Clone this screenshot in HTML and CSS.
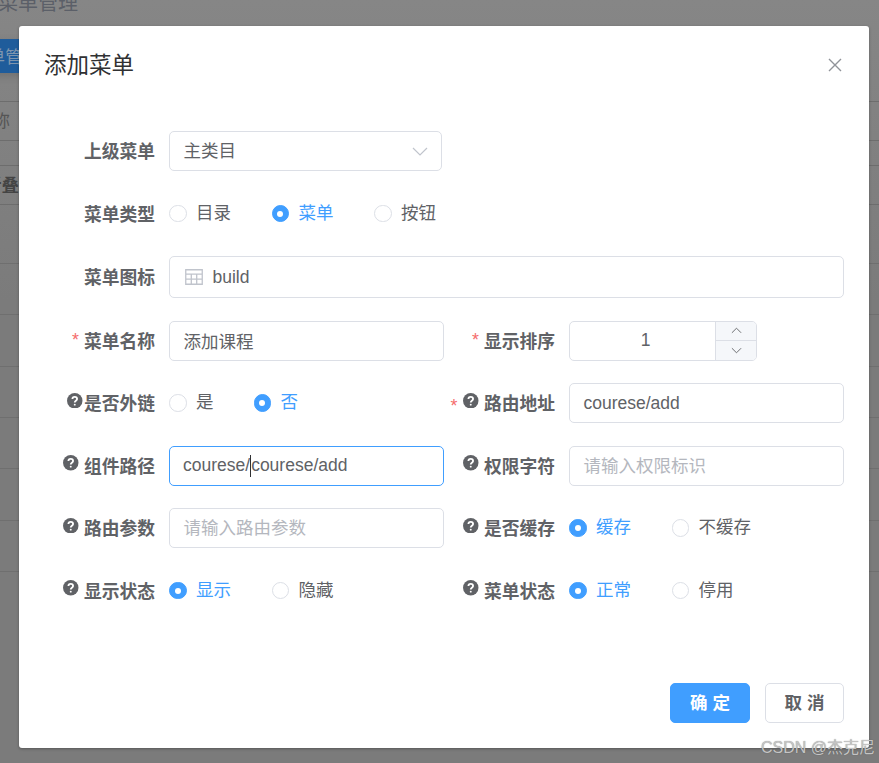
FILE: index.html
```html
<!DOCTYPE html>
<html lang="zh-CN">
<head>
<meta charset="utf-8">
<title>添加菜单</title>
<link rel="stylesheet" href="styles.css">
</head>
<body>
<div class="page">
  <div class="page-title">菜单管理</div>
  <div class="page-btn">菜单管理</div>
  <div class="table">
    <div class="row head"><span class="cell">菜单名称</span></div>
    <div class="row head second"><span class="cell bold">展开折叠</span></div>
    <div class="row tall"></div>
    <div class="row"></div><div class="row"></div><div class="row"></div>
    <div class="row"></div><div class="row"></div><div class="row"></div>
  </div>
</div>

<div class="dialog">
  <header class="dialog-header">
    <span class="dialog-title">添加菜单</span>
    <svg class="close" viewBox="0 0 14 14"><path d="M1 1 13 13M13 1 1 13"/></svg>
  </header>

  <div class="form">
    <div class="item wide">
      <div class="label">上级菜单</div>
      <div class="field select"><span class="grow cjk">主类目</span>
        <svg class="chevron" viewBox="0 0 16 9"><path d="M1 1 8 8 15 1"/></svg>
      </div>
    </div>

    <div class="item wide">
      <div class="label">菜单类型</div>
      <div class="radios">
        <span class="radio"><i class="dot"></i>目录</span>
        <span class="radio on"><i class="dot"></i>菜单</span>
        <span class="radio"><i class="dot"></i>按钮</span>
      </div>
    </div>

    <div class="item wide">
      <div class="label">菜单图标</div>
      <div class="field tall-field">
        <svg class="table-icon" viewBox="0 0 18 16"><path d="M.75.75h16.5v14.5H.75zM.75 5.2h16.5M.75 10.2h16.5M6.3 5.2v10M11.7 5.2v10"/></svg>
        <span>build</span>
      </div>
    </div>

    <div class="item">
      <div class="label"><b class="req">*</b>菜单名称</div>
      <div class="field">添加课程</div>
    </div>
    <div class="item">
      <div class="label"><b class="req">*</b>显示排序</div>
      <div class="field number">
        <span class="num-value">1</span>
        <span class="num-btns">
          <span class="num-btn"><svg viewBox="0 0 12 7"><path d="M1 6 6 1 11 6"/></svg></span>
          <span class="num-btn"><svg viewBox="0 0 12 7"><path d="M1 1 6 6 11 1"/></svg></span>
        </span>
      </div>
    </div>

    <div class="item">
      <div class="label"><svg class="help tight" viewBox="0 0 16 16"><circle cx="8" cy="8" r="8"/><path class="q" d="M5.6 6.2C5.6 4.8 6.7 4 8 4s2.4.8 2.4 2.1c0 1.9-2.4 1.8-2.4 3.6"/><circle class="qd" cx="8" cy="12" r="1"/></svg>是否外链</div>
      <div class="radios">
        <span class="radio narrow"><i class="dot"></i>是</span>
        <span class="radio on"><i class="dot"></i>否</span>
      </div>
    </div>
    <div class="item">
      <div class="label"><b class="req wide-req">*</b><svg class="help" viewBox="0 0 16 16"><circle cx="8" cy="8" r="8"/><path class="q" d="M5.6 6.2C5.6 4.8 6.7 4 8 4s2.4.8 2.4 2.1c0 1.9-2.4 1.8-2.4 3.6"/><circle class="qd" cx="8" cy="12" r="1"/></svg>路由地址</div>
      <div class="field">courese/add</div>
    </div>

    <div class="item">
      <div class="label"><svg class="help" viewBox="0 0 16 16"><circle cx="8" cy="8" r="8"/><path class="q" d="M5.6 6.2C5.6 4.8 6.7 4 8 4s2.4.8 2.4 2.1c0 1.9-2.4 1.8-2.4 3.6"/><circle class="qd" cx="8" cy="12" r="1"/></svg>组件路径</div>
      <div class="field focus">courese/<span class="caret"></span>courese/add</div>
    </div>
    <div class="item">
      <div class="label"><svg class="help" viewBox="0 0 16 16"><circle cx="8" cy="8" r="8"/><path class="q" d="M5.6 6.2C5.6 4.8 6.7 4 8 4s2.4.8 2.4 2.1c0 1.9-2.4 1.8-2.4 3.6"/><circle class="qd" cx="8" cy="12" r="1"/></svg>权限字符</div>
      <div class="field placeholder">请输入权限标识</div>
    </div>

    <div class="item">
      <div class="label"><svg class="help" viewBox="0 0 16 16"><circle cx="8" cy="8" r="8"/><path class="q" d="M5.6 6.2C5.6 4.8 6.7 4 8 4s2.4.8 2.4 2.1c0 1.9-2.4 1.8-2.4 3.6"/><circle class="qd" cx="8" cy="12" r="1"/></svg>路由参数</div>
      <div class="field placeholder">请输入路由参数</div>
    </div>
    <div class="item">
      <div class="label"><svg class="help" viewBox="0 0 16 16"><circle cx="8" cy="8" r="8"/><path class="q" d="M5.6 6.2C5.6 4.8 6.7 4 8 4s2.4.8 2.4 2.1c0 1.9-2.4 1.8-2.4 3.6"/><circle class="qd" cx="8" cy="12" r="1"/></svg>是否缓存</div>
      <div class="radios">
        <span class="radio on"><i class="dot"></i>缓存</span>
        <span class="radio"><i class="dot"></i>不缓存</span>
      </div>
    </div>

    <div class="item">
      <div class="label"><svg class="help" viewBox="0 0 16 16"><circle cx="8" cy="8" r="8"/><path class="q" d="M5.6 6.2C5.6 4.8 6.7 4 8 4s2.4.8 2.4 2.1c0 1.9-2.4 1.8-2.4 3.6"/><circle class="qd" cx="8" cy="12" r="1"/></svg>显示状态</div>
      <div class="radios">
        <span class="radio on"><i class="dot"></i>显示</span>
        <span class="radio"><i class="dot"></i>隐藏</span>
      </div>
    </div>
    <div class="item">
      <div class="label"><svg class="help" viewBox="0 0 16 16"><circle cx="8" cy="8" r="8"/><path class="q" d="M5.6 6.2C5.6 4.8 6.7 4 8 4s2.4.8 2.4 2.1c0 1.9-2.4 1.8-2.4 3.6"/><circle class="qd" cx="8" cy="12" r="1"/></svg>菜单状态</div>
      <div class="radios">
        <span class="radio on"><i class="dot"></i>正常</span>
        <span class="radio"><i class="dot"></i>停用</span>
      </div>
    </div>
  </div>

  <footer class="dialog-footer">
    <span class="btn primary">确 定</span>
    <span class="btn">取 消</span>
  </footer>
</div>

<div class="watermark">CSDN @杰克尼</div>
</body>
</html>
```
FILE: styles.css
```css
* { box-sizing: border-box; }

html, body {
  margin: 0;
  height: 100%;
  overflow: hidden;
}

body {
  font-family: "Liberation Sans", "Noto Sans CJK SC", sans-serif;
  font-size: 17.5px;
  color: #606266;
  background: linear-gradient(#868686, #7b7b7b 300px);
}

/* dimmed page behind the dialog */
.page {
  height: 763px;
  overflow: hidden;
}

.page-title {
  margin: -12px 0 0 -2px;
  height: 30px;
  line-height: 30px;
  font-size: 20px;
  color: #5b5f68;
}

.page-btn {
  margin: 21px 0 0 -30px;
  width: 110px;
  height: 34px;
  line-height: 36px;
  background: #1f5c9b;
  color: #7f96ae;
  font-size: 17.5px;
  box-shadow: 0 3px 8px rgba(0, 0, 0, .15);
}

.table {
  margin-top: 28px;
  border-top: 1px solid #6d6d6d;
}

.row {
  height: 51.3px;
  border-bottom: 1px solid #6f6f6f;
}

.row.head {
  height: 39px;
  line-height: 38px;
  border-bottom: 1px solid #6d6d6d;
}

.row.second {
  margin-top: 24px;
  border-top: 1px solid #6d6d6d;
  height: 40px;
}

.row.tall { height: 59.2px; }

.cell {
  display: block;
  margin-left: -60px;
  color: #555;
  font-size: 17.5px;
  white-space: nowrap;
}

.cell.bold {
  margin-left: -51px;
  font-weight: 700;
  color: #444;
}

/* dialog */
.dialog {
  position: absolute;
  left: 19px;
  top: 26px;
  width: 850px;
  height: 722px;
  display: flex;
  flex-direction: column;
  background: #fff;
  border-radius: 3px;
  box-shadow: 0 1px 3px rgba(0, 0, 0, .3);
}

.dialog-header {
  display: flex;
  align-items: center;
  justify-content: space-between;
  height: 78px;
  padding: 0 27px 0 25px;
}

.dialog-title {
  padding-top: 2px;
  font-size: 22.5px;
  line-height: 1;
  color: #303133;
}

.close {
  width: 14px;
  height: 14px;
  fill: none;
  stroke: #909399;
  stroke-width: 1.4;
}

.form {
  display: grid;
  grid-template-columns: 400px 400px;
  row-gap: 22.5px;
  margin-top: 27px;
  padding: 0 25px;
}

.item {
  display: flex;
  align-items: center;
  min-height: 40px;
}

.item.wide { grid-column: 1 / -1; }

.label {
  flex: none;
  display: flex;
  align-items: center;
  justify-content: flex-end;
  width: 125px;
  padding: 0 14px 2px 0;
  font-size: 17.75px;
  font-weight: 700;
  white-space: nowrap;
}

.req {
  margin: 3px 5px 0 0;
  color: #f56c6c;
  font-weight: 400;
  line-height: 1;
}

.req.wide-req { margin: 10px 6px 0 0; }

.help {
  flex: none;
  width: 15.5px;
  height: 15.5px;
  margin: 0 5px 3px 0;
  fill: #606266;
}

.help.tight { margin: 0 1px 3px 0; }

.help .q {
  fill: none;
  stroke: #fff;
  stroke-width: 1.9;
}

.help .qd { fill: #fff; }

.field {
  flex: 1;
  display: flex;
  align-items: center;
  height: 40px;
  padding: 0 13.5px;
  background: #fff;
  border: 1px solid #dcdfe6;
  border-radius: 5px;
  white-space: pre;
}

.field.focus {
  border-color: #409eff;
  padding-left: 13px;
}

.field.placeholder {
  padding-bottom: 3px;
  color: #b4b7be;
}

.field.tall-field { height: 42px; }

.field.select {
  flex: none;
  width: 273px;
}

.grow { flex: 1; }

.cjk { padding-bottom: 3px; }

.chevron {
  flex: none;
  width: 16px;
  height: 9px;
  fill: none;
  stroke: #c0c4cc;
  stroke-width: 1.2;
}

.table-icon {
  flex: none;
  width: 18px;
  height: 16px;
  margin: 0 10px 0 1px;
  fill: none;
  stroke: #c0c4cc;
  stroke-width: 1.3;
}

.caret {
  display: inline-block;
  width: 0;
  height: 22px;
  border-left: 1px solid #303133;
  margin-top: 1px;
}

/* number input */
.field.number {
  flex: none;
  width: 188px;
  padding: 0;
  overflow: hidden;
}

.num-value {
  flex: 1;
  padding-left: 6px;
  text-align: center;
}

.num-btns {
  flex: none;
  display: flex;
  flex-direction: column;
  width: 41px;
  height: 100%;
  background: #f5f7fa;
  border-left: 1px solid #dcdfe6;
}

.num-btn {
  flex: 1;
  display: flex;
  align-items: center;
  justify-content: center;
}

.num-btn + .num-btn { border-top: 1px solid #dcdfe6; }

.num-btn svg {
  width: 11px;
  height: 7px;
  fill: none;
  stroke: #606266;
  stroke-width: 1;
}

/* radios */
.radios {
  display: flex;
  align-items: center;
}

.radio {
  display: flex;
  align-items: center;
  width: 102.5px;
  line-height: 24px;
  padding-bottom: 2px;
  white-space: nowrap;
}

.radio.narrow { width: 84.5px; }

.radio.on { color: #409eff; }

.dot {
  flex: none;
  position: relative;
  top: 1px;
  width: 17.5px;
  height: 17.5px;
  margin-right: 9.5px;
  border: 1px solid #dcdfe6;
  border-radius: 50%;
  background: #fff;
}

.radio.on .dot {
  border-color: #409eff;
  background: #409eff;
}

.radio.on .dot::after {
  content: "";
  position: absolute;
  left: 50%;
  top: 50%;
  width: 6px;
  height: 6px;
  margin: -3px 0 0 -3px;
  border-radius: 50%;
  background: #fff;
}

/* footer */
.dialog-footer {
  display: flex;
  justify-content: flex-end;
  gap: 15px;
  margin-top: auto;
  padding: 0 25px 25px;
}

.btn {
  display: flex;
  align-items: center;
  justify-content: center;
  width: 79px;
  height: 40px;
  padding-bottom: 3px;
  border: 1px solid #dcdfe6;
  border-radius: 5px;
  font-weight: 700;
  background: #fff;
  white-space: pre;
}

.btn.primary {
  width: 80px;
  background: #409eff;
  border-color: #409eff;
  color: #fff;
}

.watermark {
  position: absolute;
  right: 4px;
  top: 738px;
  font-size: 16px;
  line-height: 20px;
  color: #c4c4c4;
  text-shadow: 0 0 1px rgba(60, 60, 60, .6);
  white-space: nowrap;
}
```
